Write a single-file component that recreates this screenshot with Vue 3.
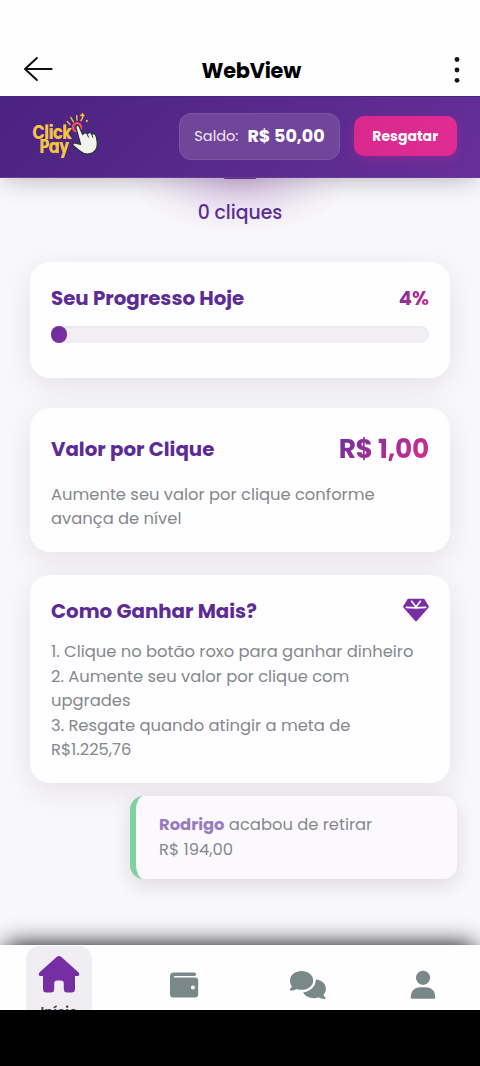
<script setup>
const steps = [
  '1. Clique no botão roxo para ganhar dinheiro',
  '2. Aumente seu valor por clique com',
  'upgrades',
  '3. Resgate quando atingir a meta de',
  'R$1.225,76',
]
</script>

<template>
  <div class="screen">
    <div class="appbar">
      <svg class="back" viewBox="0 0 30 26" width="30" height="26">
        <path d="M13.9 2 L2 13 L13.9 24 M2.2 13 H28.6" />
      </svg>
      <h1 class="appbar-title">WebView</h1>
      <svg class="more" viewBox="0 0 8 30" width="8" height="30">
        <circle cx="4" cy="4.5" r="2.4" /><circle cx="4" cy="15" r="2.4" /><circle cx="4" cy="25.3" r="2.4" />
      </svg>
    </div>

    <header class="header">
      <svg class="logo" viewBox="0 0 70 50" width="70" height="50">
        <text x="3.2" y="30.3" textLength="39" lengthAdjust="spacingAndGlyphs">Click</text>
        <text x="10.2" y="44.3" textLength="29" lengthAdjust="spacingAndGlyphs">Pay</text>
        <path class="rays" d="M37.2 12.5 L40 15.4 M40.8 8.4 L43.4 12.8 M46.7 6.6 L47 11.2 M53 8 L50.8 11.8" />
        <path class="spark" d="M52.4 3.4 l1 1.8 1.8 1 -1.8 1 -1 1.8 -1 -1.8 -1.8 -1 1.8 -1z M56.8 10.5 l1.4 1.4 -1.4 1.4 -1.4 -1.4z" />
        <circle class="ring" cx="47" cy="18.2" r="4.1" />
        <path class="hand" d="M46 18.8 C45.2 16.3 48.2 15.4 49.2 17.7 L52.7 25.6 C53.3 23.8 56.4 23.1 57.4 25.3 C58.8 22.8 61.4 23.3 61.8 25.3 C64.4 23.5 66 26.1 66.6 28.8 C68 35 67.7 41.3 62.6 43.9 C57.4 46.3 52.4 44.2 49.4 41.7 L43.4 36.8 C42 35.3 43.4 33.5 45.5 34.1 L50.6 35.3 Z" />
        <path class="fingers" d="M57.4 25.5 l1.2 3 M61.8 25.5 l1.2 3.2" />
      </svg>
      <div class="balance"><span class="balance-label">Saldo:</span><strong class="balance-value">R$ 50,00</strong></div>
      <button class="redeem"><span>Resgatar</span></button>
    </header>

    <main class="content">
      <div class="glow"></div>
      <div class="button-edge"></div>
      <p class="clicks"><span>0 cliques</span></p>

      <section class="card progress-card">
        <div class="row">
          <h2>Seu Progresso Hoje</h2>
          <span class="percent">4%</span>
        </div>
        <div class="track"><div class="fill"></div></div>
      </section>

      <section class="card value-card">
        <div class="row">
          <h2>Valor por Clique</h2>
          <span class="amount">R$ 1,00</span>
        </div>
        <p class="body">Aumente seu valor por clique conforme<br />avança de nível</p>
      </section>

      <section class="card how-card">
        <div class="row">
          <h2>Como Ganhar Mais?</h2>
          <svg class="gem" viewBox="0 0 26 24" width="26" height="24">
            <path class="gem-fill" d="M5.6 .8 H20.4 Q21.2 .8 21.7 1.5 L25.6 8.1 Q26.1 9 25.4 9.8 L14 22.8 Q13 23.9 12 22.8 L.6 9.8 Q-.1 9 .4 8.1 L4.3 1.5 Q4.8 .8 5.6 .8Z" />
            <path class="gem-line" d="M3.3 9.4 Q13 10.3 22.7 9.4 M8.6 3.2 L12.6 8.6 M17.4 3.2 L13.4 8.6" />
          </svg>
        </div>
        <p class="body"><span v-for="step in steps" :key="step" class="line">{{ step }}</span></p>
      </section>

      <aside class="toast">
        <p class="body"><span class="line"><strong>Rodrigo</strong> acabou de retirar</span><span class="line">R$ 194,00</span></p>
      </aside>
    </main>

    <nav class="nav">
      <a class="tab active">
        <svg viewBox="0 0 42 38" width="42" height="38">
          <path d="M18.9 1.8 Q21 .1 23.1 1.8 L40.4 17.2 Q42.2 19.4 40.2 21 H37 V34 Q37 37.5 33.5 37.5 H29.2 Q25.8 37.5 25.8 34 V28.7 Q25.8 25.6 22.8 25.6 H19.2 Q16.2 25.6 16.2 28.7 V34 Q16.2 37.5 12.8 37.5 H8.5 Q5 37.5 5 34 V21 H1.8 Q-.2 19.4 1.6 17.2Z" />
        </svg>
        <span class="tab-label">Início</span>
      </a>
      <a class="tab wallet">
        <svg viewBox="0 0 30 28" width="30" height="28">
          <path fill-rule="evenodd" d="M5 1.5 H25.4 Q27.2 1.5 27.2 3.2 T25.4 4.9 H5.8 Q4.8 4.9 4.8 5.7 T5.8 6.6 H26.2 Q29.2 6.6 29.2 9.6 V23 Q29.2 26.5 25.7 26.5 H4.5 Q1 26.5 1 23 V5.4 Q1 1.5 5 1.5Z M23.9 14.5 A2 2 0 1 0 23.9 18.5 A2 2 0 1 0 23.9 14.5Z" />
        </svg>
      </a>
      <a class="tab chat">
        <svg viewBox="0 0 38 30" width="38" height="30">
          <path d="M26.8 9.4 C32.7 9.9 36.9 13.8 36.9 18.7 C36.9 21 36 23.1 34.4 24.8 C35 26.2 35.7 27 36.3 27.6 C36.9 28.2 36.7 29 35.8 29 C33.4 29 31.3 28.3 29.6 27.3 C28.2 27.9 26.6 28.2 24.9 28.2 C19.9 28.2 15.8 25.8 14.1 22.3 C21.2 21.4 26.9 16.6 26.8 9.4Z" />
          <path d="M12.6 1.1 C19 1.1 24.2 5.2 24.2 10.4 S19 19.8 12.6 19.8 C10.8 19.8 9.1 19.4 7.6 18.9 C5.9 20 3.8 20.6 1.5 20.6 C.7 20.6 .5 19.9 1 19.3 C1.8 18.4 2.5 17.4 2.9 16.3 C1.7 14.7 1 12.7 1 10.4 C1 5.2 6.2 1.1 12.6 1.1Z" />
        </svg>
      </a>
      <a class="tab user">
        <svg viewBox="0 0 26 30" width="26" height="30">
          <circle cx="13" cy="7.8" r="7.1" />
          <path d="M10.2 17.3 H15.8 C21.4 17.3 25.2 21.4 25.2 26.6 V27.6 Q25.2 28.8 24 28.8 H2 Q.8 28.8 .8 27.6 V26.6 C.8 21.4 4.6 17.3 10.2 17.3Z" />
        </svg>
      </a>
    </nav>
    <div class="system"></div>
  </div>
</template>

<style>
body { margin: 0; background: #000; }
</style>

<style scoped>
* { box-sizing: border-box; }
h1, h2, p { margin: 0; }
.screen {
  width: 480px; height: 1066px; display: flex; flex-direction: column; overflow: hidden;
  background: #f8f7fa; font-family: Poppins, Inter, "Open Sans", sans-serif;
}
.appbar {
  height: 96px; flex: none; padding: 44px 19px 0 23px; background: #fefefe;
  display: flex; justify-content: space-between; align-items: center; z-index: 3;
}
.back { fill: none; stroke: #111; stroke-width: 2; stroke-linecap: round; stroke-linejoin: round; position: relative; top: -1px; }
.appbar-title { font-size: 20.8px; line-height: 26px; font-weight: 700; letter-spacing: -0.2px; color: #000; padding: 2px 3.5px 0 0; }
.more { fill: #111; }
.header {
  height: 81.5px; flex: none; padding: 0 23px 1px 30px; display: flex; align-items: center; z-index: 2;
  background: linear-gradient(135deg, #4a2280 0%, #552889 40%, #672f9b 100%);
  border-top: 1px solid #49267d; border-bottom: 1px solid #6d3b97;
  box-shadow: 0 4px 26px -4px rgba(35, 25, 55, .34);
}
.logo { margin-right: auto; margin-bottom: 5px; }
.logo text { font-size: 18.5px; font-weight: 600; fill: #f4cf20; filter: drop-shadow(-1px 0 0 #dd8cc4); }
.rays { fill: none; stroke: #f4bd2e; stroke-width: 1.4; stroke-linecap: round; }
.spark { fill: #f5bd35; }
.ring { fill: #92305f; stroke: #ee5267; stroke-width: 2.3; }
.hand { fill: #f1f2ea; stroke: #263440; stroke-width: 1.3; stroke-linejoin: round; }
.fingers { fill: none; stroke: #263440; stroke-width: 1; }
.balance {
  width: 161px; height: 47px; margin-right: 13.5px; border: 1px solid #7d56a6; border-radius: 12px;
  background: #70469a; color: #fff; display: flex; align-items: center; justify-content: center; gap: 9px;
  white-space: nowrap;
}
.balance-label { font-size: 14.5px; color: #f4e9f9; }
.balance-value { font-size: 17.5px; font-weight: 700; }
.redeem {
  width: 103.5px; height: 40px; padding: 0; border: 0; border-radius: 10px; background: linear-gradient(100deg, #d9298e, #df2c92);
  box-shadow: 0 4px 12px rgba(217, 40, 143, .28); color: #fff; font: inherit; font-size: 14px; font-weight: 700;
}
.content { flex: 1; min-height: 0; position: relative; padding: 0 30px; display: flex; flex-direction: column; }
.glow {
  position: absolute; left: 130px; top: -56px; width: 220px; height: 112px;
  background: radial-gradient(closest-side, rgba(142, 68, 173, .3), rgba(142, 68, 173, .15) 45%, rgba(142, 68, 173, .05) 75%, rgba(142, 68, 173, 0));
}
.button-edge { position: absolute; left: 224px; top: 0; width: 32px; height: 1.5px; background: #5a3185; border-radius: 0 0 16px 16px; z-index: 3; }
.clicks { position: relative; height: 26px; margin: 22.5px 0 36px; text-align: center; font-size: 18.8px; line-height: 26px; font-weight: 500; color: #5b2d91; }
.card { flex: none; position: relative; background: #fefdff; border-radius: 20px; padding: 0 21px; box-shadow: 0 8px 30px rgba(40, 25, 50, .09); }
.progress-card { height: 116px; padding-top: 21px; margin-bottom: 30px; }
.value-card { height: 144px; padding-top: 23px; margin-bottom: 23px; }
.how-card { height: 208px; padding-top: 21px; }
.row { display: flex; justify-content: space-between; align-items: center; white-space: nowrap; }
.progress-card .row, .how-card .row { height: 30px; }
.value-card .row { height: 36px; }
h2 { font-size: 19.8px; line-height: 30px; font-weight: 700; color: #5c2c94; }
.percent, .amount { background: linear-gradient(135deg, #6c2fa0, #d92d8b); background-clip: text; -webkit-background-clip: text; color: transparent; font-weight: 700; }
.percent { font-size: 19.6px; }
.amount { font-size: 26.5px; letter-spacing: -0.3px; }
.track { margin-top: 13px; height: 17px; border-radius: 9px; background: #f2f0f3; box-shadow: inset 0 1px 3px rgba(40, 30, 50, .06); }
.fill { width: 4.2%; height: 17px; border-radius: 9px; background: linear-gradient(135deg, #692d9e, #8230a4); }
.body { font-size: 16.35px; line-height: 24.5px; color: #85888c; white-space: nowrap; }
.line { display: block; }
.value-card .body { margin-top: 15.6px; }
.how-card .body { margin-top: 14px; }
.gem { position: relative; top: -1px; }
.gem-fill { fill: #7a2ea3; }
.gem-line { fill: none; stroke: #fefdff; stroke-width: 1.6; stroke-linecap: round; }
.toast {
  position: absolute; left: 130px; top: 618.3px; width: 327px; height: 83.5px; padding: 17.3px 0 0 23px;
  border-left: 6px solid #7fd29d; border-radius: 14px; background: #fbf9fd; box-shadow: 0 6px 20px rgba(40, 25, 60, .13);
}
.toast strong { color: #987bbc; font-weight: 700; }
.nav {
  height: 65px; flex: none; position: relative; background: #fefdff; display: flex;
  align-items: flex-start; padding: 1px 0 0 26px; box-shadow: 0 -6px 24px -6px #000; z-index: 2;
}
.tab { height: 64px; display: flex; justify-content: center; align-items: center; padding-top: 13px; fill: #7b8889; }
.tab svg { flex: none; }
.wallet { margin-left: 77px; }
.chat { margin-left: 90px; }
.user { margin-left: 82.5px; }
.tab.active { width: 66px; flex-direction: column; justify-content: flex-start; padding-top: 9px; background: #f0edf3; border-radius: 13px 13px 0 0; fill: #762fa3; overflow: hidden; }
.tab-label { flex: none; margin-top: 9.5px; font-size: 13.5px; line-height: 20px; font-weight: 600; color: #41364a; }
.system { height: 56px; flex: none; background: #000; position: relative; z-index: 4; }
</style>
